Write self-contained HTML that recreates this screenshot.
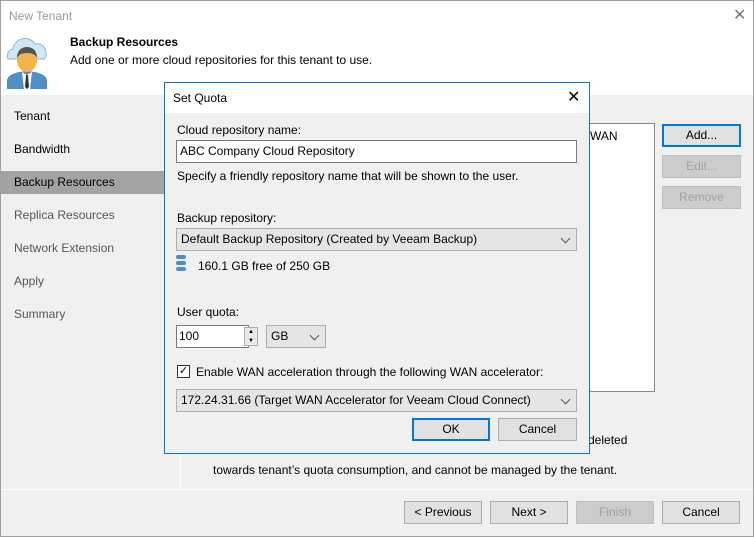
<!DOCTYPE html>
<html><head><meta charset="utf-8"><style>
*{box-sizing:border-box;margin:0;padding:0}
body{width:754px;height:537px;overflow:hidden;background:#f0f0f0;font-family:"Liberation Sans",sans-serif;font-size:12px;color:#000;position:relative}
.a{position:absolute;white-space:nowrap}
.win{position:absolute;left:0;top:0;width:754px;height:537px;border:1px solid #a0a0a0}
.btn{position:absolute;height:23px;background:#e1e1e1;border:1px solid #adadad;text-align:center;line-height:21px}
.dis{color:#a0a0a0;background:#ccc;border-color:#bfbfbf}
.nav{position:absolute;left:1px;width:163px;height:23px;padding-left:13px;line-height:23px}
.combo{position:absolute;height:23px;background:#e5e5e5;border:1px solid #adadad;line-height:21px;padding-left:4px}
.combo:after{content:"";position:absolute;right:7px;top:6px;width:6px;height:6px;border-right:1px solid #555;border-bottom:1px solid #555;transform:rotate(45deg)}
</style></head><body>
<div class="win"></div>
<div class="a" style="left:1px;top:1px;width:752px;height:94px;background:#fff"></div>
<div class="a" style="left:9px;top:9px;color:#999">New Tenant</div>
<div class="a" style="left:733px;top:5px;color:#777;font-size:16px">✕</div>
<svg class="a" style="left:6px;top:33px" width="42" height="56" viewBox="0 0 42 56">
<path d="M2 26a7 7 0 0 1 5-10a12 12 0 0 1 22-5a9 9 0 0 1 11 9a6 6 0 0 1-2 6z" fill="#d5e6f3" stroke="#8ab4d8"/>
<path d="M1 56v-8c0-6 8-9 20-10c12 1 20 4 20 10v8z" fill="#4f8fc6"/>
<path d="M16 39l5 3l5-3l-2 17h-6z" fill="#fff"/><path d="M20 42h2l1 12l-2 2l-2-2z" fill="#333"/>
<ellipse cx="21" cy="27" rx="10" ry="12" fill="#f0b64a"/>
<path d="M11 25c0-8 5-11 10-11s10 3 10 11c-2-4-6-5-10-5s-8 1-10 5z" fill="#555"/>
</svg>
<div class="a" style="left:70px;top:35px;font-weight:bold">Backup Resources</div>
<div class="a" style="left:70px;top:53px">Add one or more cloud repositories for this tenant to use.</div>
<div class="nav" style="top:105px">Tenant</div>
<div class="nav" style="top:138px">Bandwidth</div>
<div class="nav" style="top:171px;background:#a3a3a3">Backup Resources</div>
<div class="nav" style="top:204px;color:#555">Replica Resources</div>
<div class="nav" style="top:237px;color:#555">Network Extension</div>
<div class="nav" style="top:270px;color:#555">Apply</div>
<div class="nav" style="top:303px;color:#555">Summary</div>
<div class="a" style="left:180px;top:95px;width:1px;height:394px;background:#fff"></div>
<div class="a" style="left:1px;top:489px;width:752px;height:1px;background:#fff"></div>
<div class="a" style="left:560px;top:123px;width:95px;height:269px;background:#fff;border:1px solid #828790"></div>
<div class="a" style="left:590px;top:129px">WAN</div>
<div class="btn" style="left:662px;top:124px;width:79px;border:2px solid #0078d7;line-height:19px">Add...</div>
<div class="btn dis" style="left:662px;top:155px;width:79px">Edit...</div>
<div class="btn dis" style="left:662px;top:186px;width:79px">Remove</div>
<div class="a" style="left:588px;top:433px">deleted</div>
<div class="a" style="left:213px;top:463px">towards tenant’s quota consumption, and cannot be managed by the tenant.</div>
<div class="btn" style="left:404px;top:501px;width:78px">&lt; Previous</div>
<div class="btn" style="left:490px;top:501px;width:78px">Next &gt;</div>
<div class="btn dis" style="left:576px;top:501px;width:78px">Finish</div>
<div class="btn" style="left:662px;top:501px;width:78px">Cancel</div>

<div class="a" style="left:164px;top:82px;width:426px;height:372px;background:#f0f0f0;border:1px solid #0078d7">
<div class="a" style="left:0;top:0;width:424px;height:30px;background:#fff"></div>
<div class="a" style="left:8px;top:8px">Set Quota</div>
<div class="a" style="left:402px;top:4px;font-size:16px">✕</div>
<div class="a" style="left:12px;top:40px">Cloud repository name:</div>
<div class="a" style="left:11px;top:57px;width:401px;height:23px;background:#fff;border:1px solid #7a7a7a;padding:3px 3px">ABC Company Cloud Repository</div>
<div class="a" style="left:12px;top:86px">Specify a friendly repository name that will be shown to the user.</div>
<div class="a" style="left:12px;top:128px">Backup repository:</div>
<div class="combo" style="left:11px;top:145px;width:401px">Default Backup Repository (Created by Veeam Backup)</div>
<svg class="a" style="left:11px;top:172px" width="10" height="16"><rect x="0" y="0" width="10" height="4" rx="2" fill="#4f8fc6"/><rect x="0" y="6" width="10" height="4" rx="2" fill="#4f8fc6"/><rect x="0" y="12" width="10" height="4" rx="2" fill="#4f8fc6"/></svg>
<div class="a" style="left:33px;top:176px">160.1 GB free of 250 GB</div>
<div class="a" style="left:12px;top:222px">User quota:</div>
<div class="a" style="left:11px;top:242px;width:73px;height:23px;background:#fff;border:1px solid #7a7a7a;padding:3px 2px">100</div>
<div class="a" style="left:79px;top:244px;width:14px;height:19px;border:1px solid #adadad;background:#e9e9e9;font-size:6px;line-height:9px;text-align:center">▲<br>▼</div>
<div class="combo" style="left:101px;top:242px;width:60px">GB</div>
<div class="a" style="left:12px;top:282px;width:13px;height:13px;border:1px solid #333;background:#fff;font-size:11px;line-height:11px;text-align:center">✓</div>
<div class="a" style="left:31px;top:282px">Enable WAN acceleration through the following WAN accelerator:</div>
<div class="combo" style="left:11px;top:306px;width:401px">172.24.31.66 (Target WAN Accelerator for Veeam Cloud Connect)</div>
<div class="btn" style="left:247px;top:335px;width:78px;border:2px solid #0078d7;line-height:19px">OK</div>
<div class="btn" style="left:333px;top:335px;width:79px">Cancel</div>
</div>
</body></html>
